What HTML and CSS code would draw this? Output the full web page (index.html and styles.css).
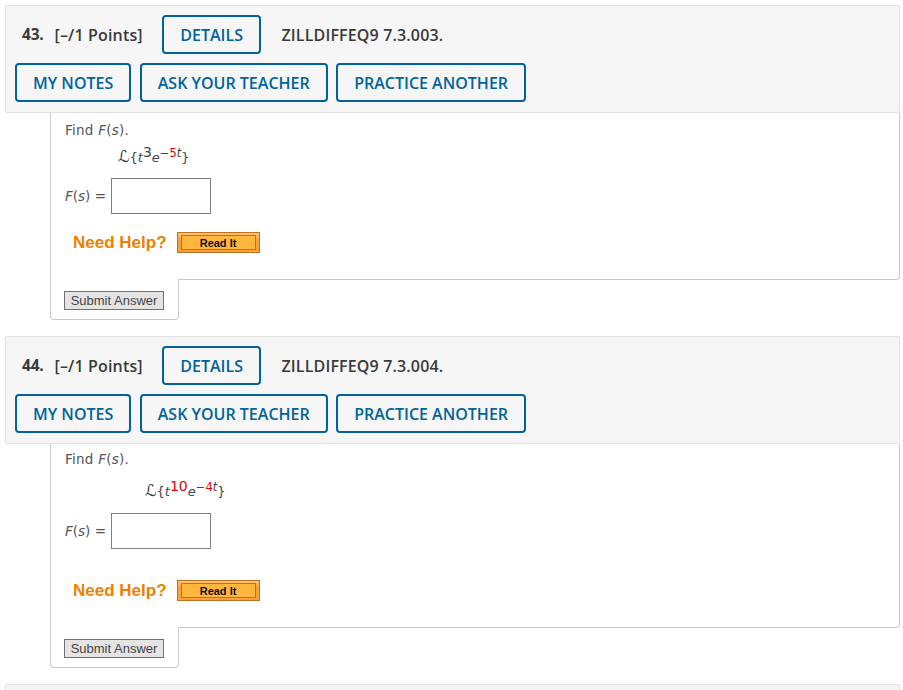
FILE: index.html
```html
<!DOCTYPE html>
<html lang="en">
<head>
    <meta charset="UTF-8">
    <title>Assignment</title>
    <link rel="stylesheet" href="styles.css">
</head>
<body>

<div class="question">
    <div class="head">
        <div class="head-row first">
            <span class="num">43.</span>
            <span class="points">[–/1 Points]</span>
            <button class="btn details">DETAILS</button>
            <span class="code">ZILLDIFFEQ9 7.3.003.</span>
        </div>
        <div class="head-row">
            <button class="btn">MY NOTES</button>
            <button class="btn">ASK YOUR TEACHER</button>
            <button class="btn">PRACTICE ANOTHER</button>
        </div>
    </div>
    <div class="body">
        <p class="find">Find <i>F</i>(<i>s</i>).</p>
        <p class="formula one">
            <span class="script">ℒ</span>{<i>t</i><sup class="power">3</sup><i>e</i><sup>−<span class="red">5</span><i>t</i></sup>}
        </p>
        <div class="answer">
            <span><i>F</i>(<i>s</i>) =</span>
            <input type="text" class="box">
        </div>
        <div class="help">
            <span class="need">Need Help?</span>
            <a class="readit"><span>Read It</span></a>
        </div>
    </div>
    <div class="submit-tab"><button class="submit">Submit Answer</button></div>
</div>

<div class="question">
    <div class="head">
        <div class="head-row first">
            <span class="num">44.</span>
            <span class="points">[–/1 Points]</span>
            <button class="btn details">DETAILS</button>
            <span class="code">ZILLDIFFEQ9 7.3.004.</span>
        </div>
        <div class="head-row">
            <button class="btn">MY NOTES</button>
            <button class="btn">ASK YOUR TEACHER</button>
            <button class="btn">PRACTICE ANOTHER</button>
        </div>
    </div>
    <div class="body tall">
        <p class="find">Find <i>F</i>(<i>s</i>).</p>
        <p class="formula two">
            <span class="script">ℒ</span>{<i>t</i><sup class="power red">10</sup><i>e</i><sup>−<span class="red">4</span><i>t</i></sup>}
        </p>
        <div class="answer">
            <span><i>F</i>(<i>s</i>) =</span>
            <input type="text" class="box">
        </div>
        <div class="help">
            <span class="need">Need Help?</span>
            <a class="readit"><span>Read It</span></a>
        </div>
    </div>
    <div class="submit-tab"><button class="submit">Submit Answer</button></div>
</div>

<div class="question">
    <div class="head stub"></div>
</div>

</body>
</html>
```

FILE: styles.css
```css
html {
    background-color: white;
}
body {
    margin: 0;
    padding: 5px 3px 0 5px;
    height: 685px;
    overflow: hidden;
    font-family: "DejaVu Sans", sans-serif;
    font-size: 13.5px;
    color: #555;
}
.question {
    margin-bottom: 16px;
}
.head {
    background-color: #f6f6f6;
    border: 1px solid #e0e0e0;
    border-radius: 2px;
    padding: 9px;
    height: 108px;
    box-sizing: border-box;
    font-family: "Open Sans", sans-serif;
    font-weight: 600;
    font-size: 16px;
    letter-spacing: 0.15px;
    color: #3a3a3a;
}
.head-row {
    display: flex;
    align-items: center;
    gap: 8.5px;
}
.head-row.first {
    gap: 8px;
    margin-bottom: 9px;
}
.num {
    margin: -2px 3px 0 7px;
    font-weight: 700;
    font-size: 15.5px;
    letter-spacing: -0.2px;
}
.points {
    margin-right: 11px;
}
.code {
    margin-left: 12px;
}
.btn {
    height: 39px;
    padding: 0 16px;
    background-color: #f6f6f6;
    border: 2px solid #00639c;
    border-radius: 4px;
    font-family: "Open Sans", sans-serif;
    font-weight: 600;
    font-size: 16px;
    color: #00639c;
}
.btn.details {
    padding: 0 16.5px;
}
.body {
    margin-left: 45px;
    height: 167px;
    box-sizing: border-box;
    background-color: white;
    border: 1px solid #c8c8c8;
    border-top: none;
    border-radius: 0 0 4px 0;
    padding: 9px 14px 0 14px;
}
.tall {
    height: 184px;
    padding-top: 7px;
}
.body p {
    margin: 0;
}
.body .find {
    letter-spacing: 0.25px;
}
.body .formula.one {
    margin: 11px 0 0 53px;
}
.body .formula.two {
    margin: 16px 0 0 80px;
}
.formula {
    font-size: 13px;
    color: #444;
    line-height: 16px;
}
.script {
    font-size: 16px;
    font-style: italic;
    color: #333;
}
.formula sup {
    font-size: 11.5px;
    line-height: 0;
}
.formula sup.power {
    font-size: 14px;
}
.red {
    color: #e00000;
}
.answer {
    display: flex;
    align-items: center;
    gap: 5px;
    margin-top: 12px;
}
.tall .answer {
    margin-top: 13px;
}
.box {
    width: 100px;
    height: 36px;
    box-sizing: border-box;
    border: 1px solid #808080;
    background-color: white;
    margin: 0;
}
.help {
    display: flex;
    align-items: center;
    gap: 10px;
    margin: 18px 0 0 8px;
}
.tall .help {
    margin-top: 31px;
}
.need {
    font-family: "Liberation Sans", sans-serif;
    font-weight: 700;
    font-size: 17px;
    color: #ee8000;
}
.readit {
    display: block;
    width: 83px;
    height: 21px;
    box-sizing: border-box;
    padding: 2px 3px;
    background: linear-gradient(#ffc27a, #fb9f3c 35%);
    border: 1px solid #b87325;
}
.readit span {
    display: block;
    height: 13px;
    border: 1px solid #b87325;
    background-color: #ffb63e;
    font-family: "Liberation Sans", sans-serif;
    font-weight: 700;
    font-size: 11px;
    line-height: 14px;
    text-align: center;
    color: #111;
}
.submit-tab {
    width: 129px;
    height: 41px;
    box-sizing: border-box;
    margin: -1px 0 0 45px;
    padding: 11px 0 0 13px;
    background-color: white;
    border: 1px solid #c8c8c8;
    border-top: 1px solid white;
    border-radius: 0 0 4px 4px;
}
.submit {
    display: block;
    width: 100px;
    height: 19px;
    padding: 0;
    box-sizing: border-box;
    background-color: #e4e4e4;
    border: 1px solid #707070;
    font-family: "Liberation Sans", sans-serif;
    font-size: 13px;
    color: #444;
}
.stub {
    height: 20px;
}
```
